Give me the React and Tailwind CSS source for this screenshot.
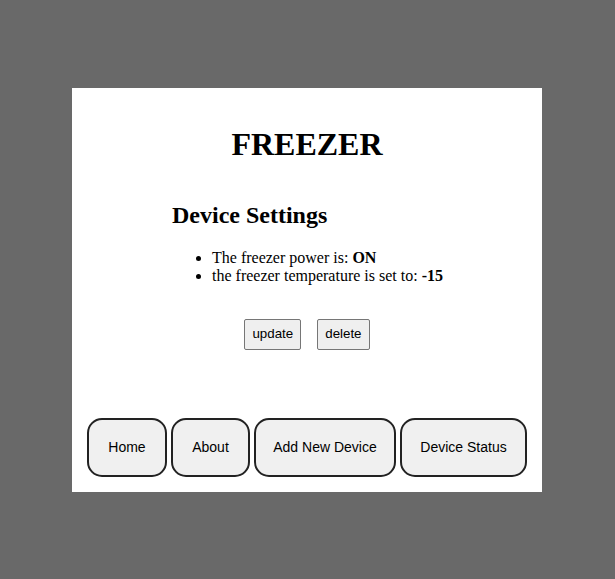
import React from "react";

const serif = { fontFamily: '"Liberation Serif", "Times New Roman", serif' };

const NavButton = ({ width, children }) => (
  <button
    className={`${width} rounded-[15px] border-2 border-[#222] bg-[#f0f0f0] py-[19.5px] text-center font-['Liberation_Sans',Arial,sans-serif] text-[14px] leading-[16px] whitespace-nowrap text-black`}
  >
    {children}
  </button>
);

const App = () => {
  return (
    <div className="flex min-h-screen items-center bg-[#696969] pl-[72px]">
      <div
        className="flex h-[404px] w-[470px] flex-col bg-white pt-[38px] pb-[15px] text-black"
        style={serif}
      >
        <h1 className="text-center text-[32px] font-bold leading-[36px]">FREEZER</h1>

        <div className="ml-[100px] mt-[40px]">
          <h2 className="text-[24px] font-bold leading-[27px]">Device Settings</h2>
          <ul className="mt-[20px] list-disc pl-[40px] text-[16px] leading-[18px]">
            <li>
              The freezer power is: <b>ON</b>
            </li>
            <li>
              the freezer temperature is set to: <b>-15</b>
            </li>
          </ul>
        </div>

        <div className="mt-[34px] flex justify-center gap-[16px]">
          <button className="rounded-[2px] border border-[#767676] bg-[#efefef] px-[7px] py-[6.5px] font-['Liberation_Sans',Arial,sans-serif] text-[13.33px] leading-[16px]">
            update
          </button>
          <button className="rounded-[2px] border border-[#767676] bg-[#efefef] px-[7px] py-[6.5px] font-['Liberation_Sans',Arial,sans-serif] text-[13.33px] leading-[16px]">
            delete
          </button>
        </div>

        <nav className="mt-auto flex justify-center gap-[4px]">
          <NavButton width="w-[80px]">Home</NavButton>
          <NavButton width="w-[79px]">About</NavButton>
          <NavButton width="w-[142px]">Add New Device</NavButton>
          <NavButton width="w-[127px]">Device Status</NavButton>
        </nav>
      </div>
    </div>
  );
};

export default App;
